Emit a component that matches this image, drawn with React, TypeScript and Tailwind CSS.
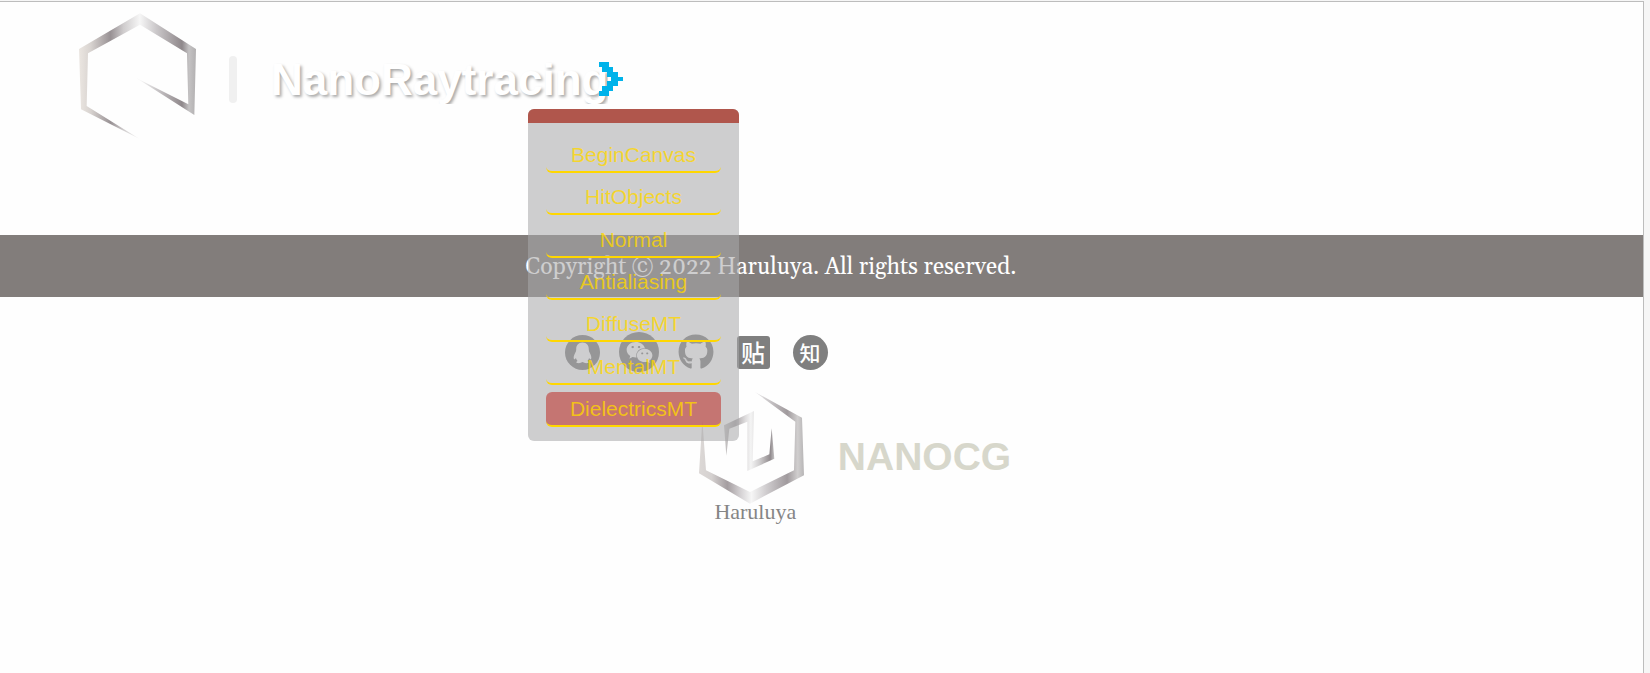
import { FaGithub, FaWeixin } from "react-icons/fa";

const scenes = ["BeginCanvas", "HitObjects", "Normal", "Antialiasing", "DiffuseMT", "MentalMT", "DielectricsMT"];
const activeScene = "DielectricsMT";

function MetalStops() {
  return (
    <>
      <stop offset="0" stopColor="#ebe6e1" />
      <stop offset="0.1" stopColor="#d8d3d0" />
      <stop offset="0.27" stopColor="#989194" />
      <stop offset="0.38" stopColor="#cfcccd" />
      <stop offset="0.52" stopColor="#f6f6f6" />
      <stop offset="0.66" stopColor="#cbc8ca" />
      <stop offset="0.88" stopColor="#8f888b" />
      <stop offset="0.94" stopColor="#c4c2c3" />
      <stop offset="1" stopColor="#b2b0b1" />
    </>
  );
}

function HexLogo() {
  return (
    <svg viewBox="57 38 351 378" className="h-[126px] w-[117px] shrink-0" aria-hidden="true">
      <defs>
        <linearGradient id="metalTop" gradientUnits="userSpaceOnUse" x1="57" y1="0" x2="408" y2="0">
          <MetalStops />
        </linearGradient>
      </defs>
      <path
        fill="url(#metalTop)"
        d="M57 146 L240 39 L408 146 L403 344 L230 234 L385 312 L381 159 L240 73 L84 159 L80 317 L238 415 L63 327Z"
      />
    </svg>
  );
}

function NanoLogo() {
  return (
    <svg viewBox="57 33 315 336" className="h-[112px] w-[105px]" aria-hidden="true">
      <defs>
        <linearGradient id="metalLow" gradientUnits="userSpaceOnUse" x1="57" y1="0" x2="372" y2="0">
          <stop offset="0" stopColor="#dcd8d6" />
          <stop offset="0.12" stopColor="#d5d1d0" />
          <stop offset="0.27" stopColor="#a49da0" />
          <stop offset="0.4" stopColor="#d6d3d5" />
          <stop offset="0.5" stopColor="#f6f6f6" />
          <stop offset="0.64" stopColor="#d0cdcf" />
          <stop offset="0.84" stopColor="#a09a9d" />
          <stop offset="0.94" stopColor="#d0cece" />
          <stop offset="1" stopColor="#b7b5b6" />
        </linearGradient>
        <linearGradient id="metalInner" gradientUnits="userSpaceOnUse" x1="133" y1="0" x2="283" y2="0">
          <stop offset="0" stopColor="#c9c7c7" />
          <stop offset="0.22" stopColor="#aaa5a7" />
          <stop offset="0.42" stopColor="#dedcdd" />
          <stop offset="0.53" stopColor="#f4f4f4" />
          <stop offset="0.7" stopColor="#d1cfd0" />
          <stop offset="0.92" stopColor="#918b8e" />
          <stop offset="1" stopColor="#c4c2c3" />
        </linearGradient>
      </defs>
      <path
        fill="url(#metalLow)"
        d="M67 118 L78 268 L210 333 L342 268 L346 122 L225 33 L366 110 L372 283 L210 368 L57 277Z"
      />
      <path
        fill="url(#metalInner)"
        d="M139 224 L132 133 L222 90 L218 241 L268 220 L275 142 L283 233 L202 270 L202 122 L148 143Z"
      />
    </svg>
  );
}

function SceneMenu() {
  return (
    <nav
      aria-label="Scenes"
      className="absolute top-[109px] left-[528px] z-10 w-[211px] overflow-hidden rounded-md bg-[#a7a7a9]/56"
    >
      <div className="h-[14px] bg-[#b0564c]" />
      <ul className="flex h-[304px] flex-col justify-between px-[18px] pt-[15px]">
        {scenes.map((scene) => (
          <li key={scene}>
            <a
              href={"#" + scene}
              className={
                "block h-[35px] rounded-md border-b-2 border-[#ffd700] text-center text-[21px] leading-[33px] text-[#ffd700]/78 " +
                (scene === activeScene ? "bg-[#bf3a34]/60" : "")
              }
            >
              {scene}
            </a>
          </li>
        ))}
      </ul>
      <div className="h-[14px]" />
    </nav>
  );
}

export default function App() {
  return (
    <div className="min-h-screen bg-[#f6f6f6] pt-px pr-[6px] font-['Liberation_Sans',Arial,sans-serif]">
      <div className="min-h-[672px] border-t border-r border-[#bdbdbd] bg-[#fefefe]">
        <header className="flex h-[233px] items-start pt-[11px] pl-[79px]">
          <HexLogo />
          <div className="mt-[43px] ml-[33px] h-[47px] w-[8px] rounded-full bg-[#f0f0f0]" />
          <div className="relative mt-[41px] ml-[34px]">
            <h1 className="h-[50px] overflow-hidden text-[44px] leading-[52px] font-bold text-white [text-shadow:2px_2px_3px_#aaa]">
              NanoRaytracing
            </h1>
            <button type="button" aria-label="Open scene menu" className="absolute top-[8px] -right-[15px] h-[34px] w-[24px]">
              <svg viewBox="0 0 5 7" preserveAspectRatio="none" shapeRendering="crispEdges" className="block h-full w-full">
                <path fill="#00b3ea" d="M0 0H2V1H3V2H4V3H5V4H4V5H3V6H2V7H0V6H.7V5H1.7V4H2.6V3H1.7V2H.7V1H0Z" />
              </svg>
            </button>
          </div>
        </header>
        <SceneMenu />
        <footer>
          <p className="bg-[#827d7b] pt-[4px] pr-[101px] text-center font-[Georgia,'Gelasio','Liberation_Serif',serif] text-[23px] leading-[58px] oldstyle-nums text-white">
            Copyright © 2022 Haruluya. All rights reserved.
          </p>
          <div className="flex items-center justify-center gap-[17px] pt-[35px] pr-[251px]">
            <a href="#qq" aria-label="QQ" className="flex size-10 items-center justify-center">
              <svg viewBox="0 0 106 106" className="size-[35px]">
                <circle cx="53" cy="53" r="53" fill="#7f7f7f" />
                <path
                  fill="#fefefe"
                  d="M53 23c-13 0-19 9-19 20 0 6-2 9-4 13-3 6-5 12-3 17 1 2 4 0 6-3 1 4 3 7 5 9-4 2-5 5-1 6 6 1 12 0 16-3 4 3 10 4 16 3 4-1 3-4-1-6 2-2 4-5 5-9 2 3 5 5 6 3 2-5 0-11-3-17-2-4-4-7-4-13 0-11-6-20-19-20Z"
                />
              </svg>
            </a>
            <a href="#wechat" aria-label="WeChat" className="flex size-10 items-center justify-center rounded-full bg-[#7f7f7f] text-[#fefefe]">
              <FaWeixin size={27} />
            </a>
            <a href="#github" aria-label="GitHub" className="flex size-10 items-center justify-center text-[#7f7f7f]">
              <FaGithub size={36} />
            </a>
            <a href="#tieba" className="flex size-10 items-center justify-center">
              <span className="flex size-[33px] items-center justify-center rounded-[3px] bg-[#7f7f7f] font-['Noto_Sans_CJK_SC',sans-serif] text-[24px] leading-[30px] font-medium text-[#fefefe]">
                贴
              </span>
            </a>
            <a href="#zhihu" className="flex size-10 items-center justify-center">
              <span className="flex size-[35px] items-center justify-center rounded-full bg-[#7f7f7f] font-['Noto_Sans_CJK_SC',sans-serif] text-[21px] leading-[30px] font-medium text-[#fefefe]">
                知
              </span>
            </a>
          </div>
          <div className="flex items-start justify-center gap-[34px] pt-[20px] pl-[67px]">
            <div className="flex flex-col items-center">
              <NanoLogo />
              <span className="pl-[8px] font-['Liberation_Serif',serif] text-[22px] leading-[16px] text-[#858585]">Haruluya</span>
            </div>
            <p className="pt-[43px] text-[39px] leading-[44px] font-bold text-[#d7d7cb]">NANOCG</p>
          </div>
        </footer>
      </div>
    </div>
  );
}
